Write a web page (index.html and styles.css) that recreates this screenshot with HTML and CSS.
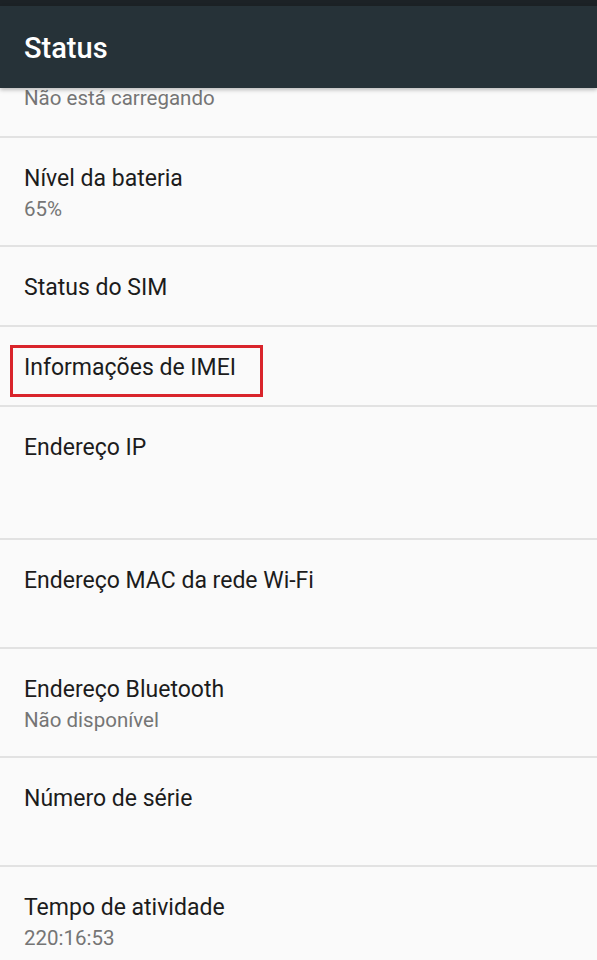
FILE: index.html
```html
<!DOCTYPE html>
<html lang="pt">
<head>
  <meta charset="UTF-8" />
  <meta name="viewport" content="width=device-width, initial-scale=1.0" />
  <title>Status</title>
  <link rel="stylesheet" href="styles.css">
</head>
<body>

  <div class="statusbar"></div>
  <div class="toolbar">
    <h1>Status</h1>
  </div>

  <div class="list">
    <div class="item cut">
      <div class="summary">Não está carregando</div>
    </div>
    <div class="item">
      <div class="title">Nível da bateria</div>
      <div class="summary">65%</div>
    </div>
    <div class="item">
      <div class="title">Status do SIM</div>
    </div>
    <div class="item">
      <div class="title"><span class="marked">Informações de IMEI</span></div>
    </div>
    <div class="item">
      <div class="title">Endereço IP</div>
      <div class="summary blank two"></div>
    </div>
    <div class="item">
      <div class="title">Endereço MAC da rede Wi-Fi</div>
      <div class="summary blank"></div>
    </div>
    <div class="item">
      <div class="title">Endereço Bluetooth</div>
      <div class="summary">Não disponível</div>
    </div>
    <div class="item">
      <div class="title">Número de série</div>
      <div class="summary blank"></div>
    </div>
    <div class="item">
      <div class="title">Tempo de atividade</div>
      <div class="summary">220:16:53</div>
    </div>
  </div>

</body>
</html>
```

FILE: styles.css
```css
body {
  margin: 0;
  font-family: Roboto, 'Noto Sans', sans-serif;
  background: #fafafa;
  overflow: hidden;
}
.statusbar {
  height: 6px;
  background: #1c2226;
}
.toolbar {
  height: 82px;
  background: #263238;
  padding: 0 24px;
  display: flex;
  align-items: center;
  box-shadow: 0 2px 4px rgba(0,0,0,0.25);
  position: relative;
  z-index: 1;
}
.toolbar h1 {
  margin: 0;
  color: #fff;
  font-size: 29px;
  font-weight: 500;
  padding-top: 2px;
}
.item {
  padding: 25px 24px 21px;
  border-bottom: 2px solid #e2e2e2;
}
.item.cut {
  padding: 0 24px 26px;
  height: 22px;
}
.title {
  color: #1c1c1c;
  font-size: 23px;
  line-height: 32px;
}
.summary {
  color: #757575;
  font-size: 20.5px;
  line-height: 29px;
}
.summary.blank {
  height: 29px;
}
.summary.two {
  height: 53px;
}
.item.cut .summary {
  line-height: 20px;
}
.marked {
  display: inline-block;
  position: relative;
}
.marked::after {
  content: "";
  position: absolute;
  left: -14px;
  right: -27px;
  top: -7px;
  bottom: -13px;
  border: 3px solid #d9242b;
}
```
